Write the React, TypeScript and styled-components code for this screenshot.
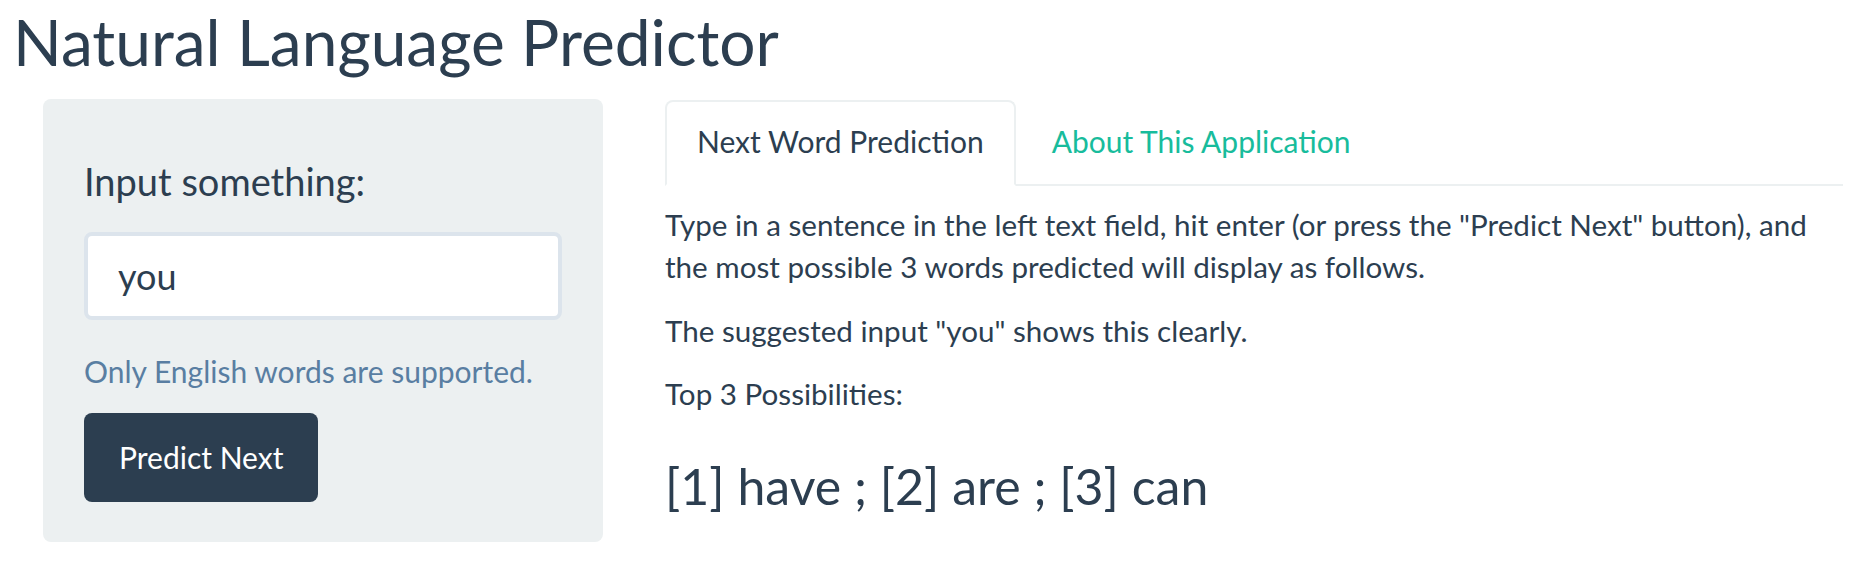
import React from "react";
import styled, { createGlobalStyle } from "styled-components";

const GlobalStyle = createGlobalStyle`
  html, body {
    margin: 0;
    padding: 0;
    background: #ffffff;
  }
  body {
    font-family: Lato, "Noto Sans", "Liberation Sans", sans-serif;
    color: #2c3e50;
  }
  * { box-sizing: border-box; }
`;

const Page = styled.div`
  padding: 7px 9px 0 13px;
`;

const Title = styled.h2`
  margin: 0;
  font-size: 64px;
  line-height: 70px;
  font-weight: 400;
  color: #2c3e50;
`;

const Row = styled.div`
  display: flex;
  align-items: flex-start;
  margin-top: 22px;
`;

const Sidebar = styled.form`
  margin: 0 0 0 30px;
  width: 560px;
  height: 443px;
  flex: none;
  background: #ecf0f1;
  border-radius: 8px;
  padding: 38px 38px 40px 41px;
  display: flex;
  flex-direction: column;
  align-items: flex-start;
`;

const Label = styled.h4`
  margin: 23px 0 0;
  font-size: 38px;
  line-height: 42px;
  font-weight: 400;
`;

const TextInput = styled.input`
  margin-top: 30px;
  width: 478px;
  height: 88px;
  border: 4px solid #dce4ec;
  border-radius: 8px;
  background: #ffffff;
  padding: 0 30px;
  font-family: inherit;
  font-size: 36px;
  color: #2c3e50;
  outline: none;
`;

const HelpText = styled.p`
  margin: 30px 0 0;
  font-size: 30px;
  line-height: 42.86px;
  color: #597ea2;
`;

const Button = styled.button`
  margin-top: 21px;
  height: 89px;
  padding: 0 35px;
  border: none;
  border-radius: 8px;
  background: #2c3e50;
  color: #ffffff;
  font-family: inherit;
  font-size: 30px;
  line-height: 42.86px;
  cursor: pointer;
`;

const Main = styled.div`
  flex: 1;
  margin: 1px 0 0 62px;
  min-width: 0;
`;

const Tabs = styled.ul`
  list-style: none;
  margin: 0;
  padding: 0;
  display: flex;
  border-bottom: 2px solid #ecf0f1;
`;

const Tab = styled.li<{ $active?: boolean }>`
  margin: 0 4px -2px 0;
  padding: 18px 30px 21px;
  border: 2px solid ${(p) => (p.$active ? "#ecf0f1" : "transparent")};
  border-bottom-color: ${(p) => (p.$active ? "#ffffff" : "transparent")};
  border-radius: 8px 8px 0 0;
  background: ${(p) => (p.$active ? "#ffffff" : "transparent")};
  font-size: 30px;
  line-height: 42.86px;
  color: ${(p) => (p.$active ? "#2c3e50" : "#18bc9c")};
  cursor: pointer;
`;

const Content = styled.div`
  padding-top: 18px;
`;

const Para = styled.p`
  margin: 0 0 21px;
  font-size: 29.6px;
  line-height: 42.4px;
`;

const Result = styled.h3`
  margin: 44px 0 0;
  font-size: 50px;
  line-height: 55px;
  font-weight: 400;
`;

export default function App() {
  return (
    <>
      <GlobalStyle />
      <Page>
        <Title>Natural Language Predictor</Title>
        <Row>
          <Sidebar onSubmit={(e) => e.preventDefault()}>
            <Label>Input something:</Label>
            <TextInput defaultValue="you" />
            <HelpText>Only English words are supported.</HelpText>
            <Button type="submit">Predict Next</Button>
          </Sidebar>
          <Main>
            <Tabs>
              <Tab $active>Next Word Prediction</Tab>
              <Tab>About This Application</Tab>
            </Tabs>
            <Content>
              <Para>
                Type in a sentence in the left text field, hit enter (or press the "Predict Next" button), and the
                most possible 3 words predicted will display as follows.
              </Para>
              <Para>The suggested input "you" shows this clearly.</Para>
              <Para>Top 3 Possibilities:</Para>
              <Result>[1] have ; [2] are ; [3] can</Result>
            </Content>
          </Main>
        </Row>
      </Page>
    </>
  );
}
